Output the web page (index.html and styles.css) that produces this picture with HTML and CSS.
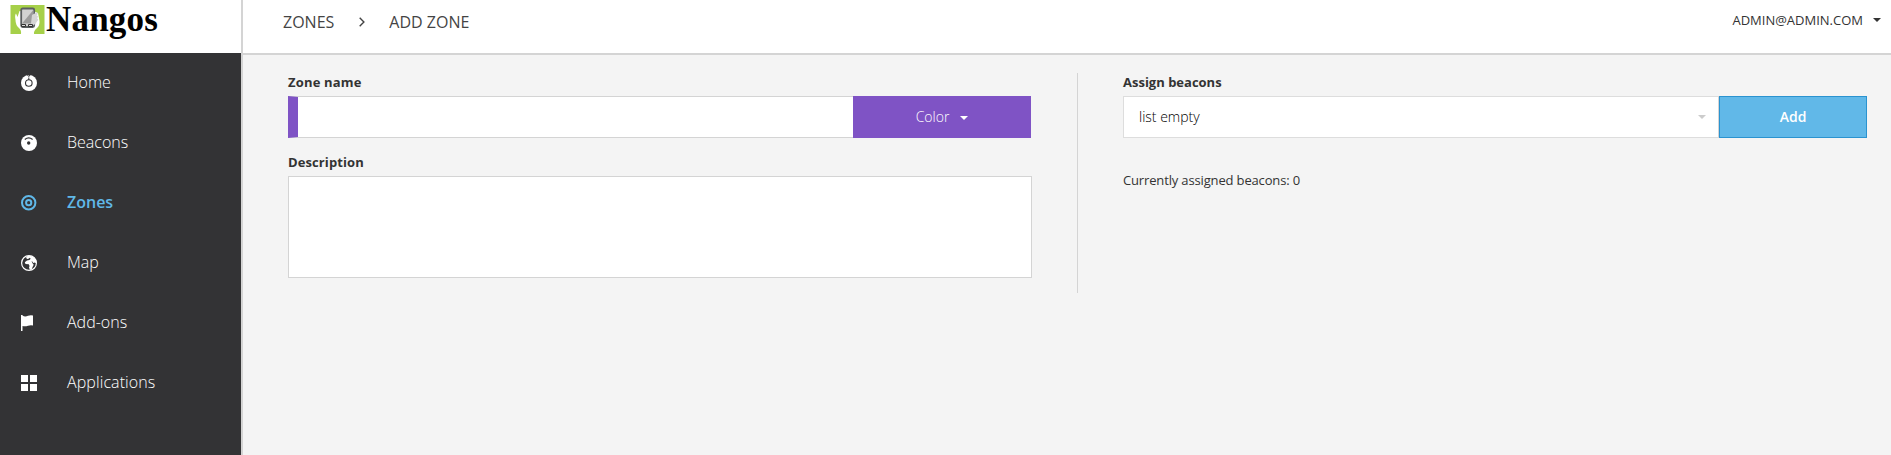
FILE: index.html
```html
<!DOCTYPE html>
<html lang="en">
<head>
<meta charset="utf-8">
<title>Nangos - Add zone</title>
<link rel="stylesheet" href="styles.css">
</head>
<body>
<div class="app">
  <aside class="sidebar">
    <div class="brand">
      <svg class="brand-logo" width="35" height="29" viewBox="0 0 35 29">
        <path fill="#a6d049" d="M.500 0h34v29h-34z"/>
        <path fill="#fff" d="M9.500 6L7.500 12 6 8.500Q4.500 10 5.500 15 5.500 20 9 23q2.500 2 2 6h13q-.500-3 2.500-5.500 3.500-3 3-7.500l-1.500-8-5-2z"/>
        <rect x="11.200" y="3.500" width="13" height="18.500" rx="1.500" fill="#d2d2d2" stroke="#5b5f61" stroke-width="1.800"/>
        <path fill="#9c9c9c" d="M23.300 5v13.500H12z"/>
        <path fill="#d6d6d6" d="M22 10l4.500-2.500q2.500 1 0 3 2.700 0 .5 3 2.500 0 0 3-1 3-4.500 4l-1.500-2z"/>
        <path fill="#ddd" stroke="#333" d="M11.500 19.500h4v2h-4zM18.500 19.500h4v2h-4z"/>
      </svg>
      <span class="brand-name">Nangos</span>
    </div>
    <nav class="menu">
      <a class="menu-item">
        <svg width="16" height="16" viewBox="0 0 16 16"><circle cx="8" cy="8" r="8" fill="#fff"/><circle cx="7.800" cy="8" r="3.300" fill="none" stroke="#333335" stroke-width="1.100"/><path d="M7.800 2.500V5M6.500 0L7.800 1.500 9 0" fill="none" stroke="#333335"/></svg>
        <span>Home</span>
      </a>
      <a class="menu-item">
        <svg width="16" height="16" viewBox="0 0 16 16"><circle cx="8" cy="8" r="8" fill="#fff"/><circle cx="7.700" cy="8" r="1.700" fill="#333335"/><path d="M3.800 4.500Q7.700 1.200 11.600 4.500" fill="none" stroke="#333335" stroke-width="1.200"/></svg>
        <span>Beacons</span>
      </a>
      <a class="menu-item active">
        <svg width="16" height="16" viewBox="0 0 16 16" fill="none" stroke="#60b8e8" stroke-width="2"><circle cx="7.700" cy="7.700" r="6.700"/><circle cx="7.700" cy="7.700" r="2.600"/></svg>
        <span>Zones</span>
      </a>
      <a class="menu-item">
        <svg width="16" height="16" viewBox="0 0 16 16"><circle cx="8" cy="8" r="7.400" fill="none" stroke="#fff" stroke-width="1.200"/><path fill="#fff" d="M6.500 1L5 2.500 6 4l1.500-.3L8.700 2.700l1 1L8.500 5 6 5.600 3.800 7.300 4.500 9l3.300.3L8.500 11l-.5 1.500.8 2.200h1.700l1.200-3 1-2-1.200-1.500-1-2 .8.200 1 1.600 1.600-.5 1.600 1L15.500 6 13 2.500 10 1z"/></svg>
        <span>Map</span>
      </a>
      <a class="menu-item">
        <svg width="16" height="16" viewBox="0 0 16 16"><path fill="#fff" d="M0 0h1.500v.6Q4 2.200 7 .8q2.500-1 5-.3v10q-2.500-.6-5 .3-2.800 1-5.500.2v5H0z"/></svg>
        <span>Add-ons</span>
      </a>
      <a class="menu-item">
        <svg width="16" height="16" viewBox="0 0 16 16"><path fill="#fff" d="M0 0h7v7H0zM9 0h7v7H9zM0 9h7v7H0zM9 9h7v7H9z"/></svg>
        <span class="apps">Applications</span>
      </a>
    </nav>
  </aside>
  <div class="main">
    <header class="topbar">
      <div class="crumbs">
        <span>ZONES</span>
        <svg class="crumb-arrow" width="6" height="10" viewBox="0 0 6 10"><path d="M.7.7L4.900 5 .7 9.300" fill="none" stroke="#444" stroke-width="1.400"/></svg>
        <span>ADD ZONE</span>
      </div>
      <div class="user"><span>ADMIN@ADMIN.COM</span><i class="caret"></i></div>
    </header>
    <main class="content">
      <section class="zone">
        <label class="label label-name" for="name">Zone name</label>
        <div class="row">
          <input class="name-input" id="name" type="text">
          <button class="color-btn">Color<i class="caret"></i></button>
        </div>
        <label class="label label-desc" for="desc">Description</label>
        <textarea class="desc" id="desc"></textarea>
      </section>
      <section class="beacons">
        <span class="label">Assign beacons</span>
        <div class="row">
          <div class="select"><span>list empty</span><i class="caret"></i></div>
          <button class="add-btn">Add</button>
        </div>
        <p class="assigned">Currently assigned beacons: 0</p>
      </section>
    </main>
  </div>
</div>
</body>
</html>
```
FILE: styles.css
```css
* { box-sizing: border-box; }
body {
  margin: 0;
  background: #f4f4f4;
  color: #333;
  font: 13px/20px "Open Sans", sans-serif;
}
.app { display: flex; height: 455px; overflow: hidden; }
.sidebar {
  display: flex;
  flex-direction: column;
  width: 243px;
  flex: none;
  background: #333335;
  border-right: 2px solid #d4d4d4;
}
.brand {
  display: flex;
  align-items: flex-start;
  height: 53px;
  padding: 5px 0 0 10px;
  background: #fff;
}
.brand-logo { flex: none; }
.brand-name {
  margin-left: 1px;
  margin-top: -5px;
  color: #000;
  font: bold 35px/40px "Liberation Serif", serif;
  letter-spacing: .2px;
}
.menu { display: flex; flex-direction: column; }
.menu-item {
  display: flex;
  align-items: center;
  gap: 30px;
  height: 60px;
  padding-left: 21px;
  color: #fff;
  font-size: 16px;
  font-weight: 300;
}
.menu-item span { padding-bottom: 2px; }
.menu-item .apps { letter-spacing: .1px; }
.menu-item.active { color: #60b8e8; font-weight: 600; }
.main { flex: 1; display: flex; flex-direction: column; min-width: 0; }
.topbar {
  display: flex;
  justify-content: space-between;
  height: 55px;
  padding: 0 10px 0 40px;
  background: #fff;
  border-bottom: 2px solid #d4d4d4;
}
.crumbs { display: flex; align-items: center; height: 44px; font-size: 16px; color: #444; }
.crumb-arrow { margin: 0 24px 1px 25px; }
.user { display: flex; align-items: center; height: 40px; gap: 10px; }
.user span { margin-bottom: 1px; }
.caret {
  width: 0;
  height: 0;
  border: 4px solid transparent;
  border-top-color: currentColor;
  border-bottom: 0;
}
.content { display: flex; padding: 18px 24px 0 45px; }
.zone {
  width: 790px;
  height: 220px;
  padding-right: 45px;
  border-right: 1px solid #d4d4d4;
}
.label { display: block; height: 23px; line-height: 19px; font-weight: 700; }
.label-name { letter-spacing: .18px; }
.row { display: flex; height: 42px; }
.name-input {
  flex: 1;
  min-width: 0;
  border: 1px solid #d4d4d4;
  border-right: 0;
  border-left: 10px solid #7f53c5;
  background: #fff;
}
.color-btn {
  display: flex;
  align-items: center;
  justify-content: center;
  gap: 11px;
  width: 178px;
  margin-right: 1px;
  padding: 0;
  border: 0;
  background: #7f53c5;
  color: #fff;
  font: 300 14px/20px "Open Sans", sans-serif;
}
.color-btn .caret { margin-top: 1px; }
.label-desc { margin-top: 15px; letter-spacing: .1px; }
.desc {
  display: block;
  width: 100%;
  height: 102px;
  border: 1px solid #d4d4d4;
  background: #fff;
  resize: none;
}
.beacons { flex: 1; padding-left: 45px; }
.select {
  display: flex;
  align-items: center;
  justify-content: space-between;
  flex: 1;
  padding: 0 12px 0 15px;
  border: 1px solid #ddd;
  border-right-color: #d4d4d4;
  background: #fff;
  color: #000;
  font-size: 14px;
  font-weight: 300;
}
.select .caret { color: #ccc; }
.add-btn {
  width: 148px;
  padding: 0;
  border: 1px solid #2a93d0;
  background: #61b8e8;
  color: #fff;
  font: 600 14px/20px "Open Sans", sans-serif;
}
.assigned { margin: 32px 0 0; letter-spacing: -.15px; }
```
